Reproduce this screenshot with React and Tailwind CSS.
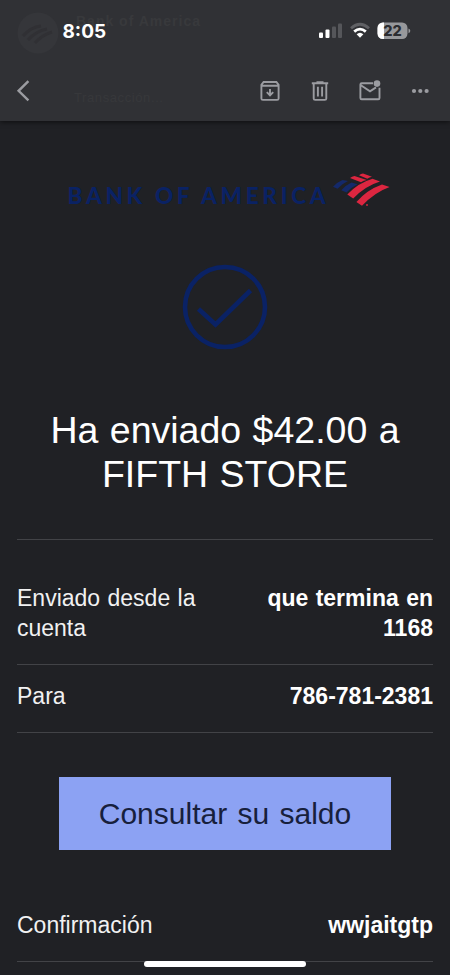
const ROWS = [
  { label: "Enviado desde la cuenta", value: "que termina en 1168" },
  { label: "Para", value: "786-781-2381" },
];

function StatusBar() {
  return (
    <div className="flex h-[62px] items-center justify-between pl-[62.5px] pr-[39px]">
      <span className="font-['Inter',sans-serif] text-[19px] leading-none font-bold text-white">8:05</span>
      <svg width="92" height="18" viewBox="0 0 92 18">
        <rect x="0" y="10.5" width="4" height="5.5" rx="1" fill="#fff" />
        <rect x="6.5" y="7.5" width="4" height="8.5" rx="1" fill="#fff" />
        <rect x="13" y="4.5" width="4" height="11.5" rx="1" fill="#55565a" />
        <rect x="19" y="1.5" width="4" height="14.5" rx="1" fill="#55565a" />
        <path d="M32 6.2 Q41 -1.6 50 6.2" fill="none" stroke="#606165" strokeWidth="2.8" />
        <path d="M35.2 9.6 Q41 4.6 46.8 9.6" fill="none" stroke="#fff" strokeWidth="2.8" />
        <path d="M37.6 12.3 Q41 9.2 44.4 12.3 L41 15.8 Z" fill="#fff" />
        <rect x="58.5" y="0.5" width="30" height="16.5" rx="5.4" fill="#97989b" />
        <path d="M65 0.5 H63.9 A5.4 5.4 0 0 0 58.5 5.9 V11.6 A5.4 5.4 0 0 0 63.9 17 H65 Z" fill="#fff" />
        <path d="M89.5 6.4 Q91.3 7.2 91.3 8.8 Q91.3 10.4 89.5 11.2 Z" fill="#97989b" />
        <text x="73.5" y="13.8" textAnchor="middle" fontFamily="Inter, sans-serif" fontSize="14.5" fontWeight="800" fill="#2b2c30">
          22
        </text>
      </svg>
    </div>
  );
}

function Toolbar() {
  return (
    <div className="flex h-[58px] items-center justify-between pl-[16px] pr-[19px] text-[#9b9ca1]">
      <svg width="15" height="22" viewBox="0 0 15 22" fill="none" stroke="currentColor" strokeWidth="2.4">
        <path d="M12.4 1.2 L2.6 10.8 L12.4 20.4" />
      </svg>
      <div className="flex items-center gap-[28px]">
        <svg width="22" height="22" viewBox="0 0 22 22" fill="none" stroke="currentColor" strokeWidth="1.9">
          <path d="M2.4 4.8 L4.6 2 H17.4 L19.6 4.8 V18.4 Q19.6 19.9 18.1 19.9 H3.9 Q2.4 19.9 2.4 18.4 Z M2.4 5.8 H19.6 M11 9 V15 M7.8 12.2 L11 15.4 L14.2 12.2" />
        </svg>
        <svg width="22" height="22" viewBox="0 0 22 22" fill="none" stroke="currentColor" strokeWidth="1.9">
          <path d="M2.8 3.3 H19.2 M7.5 2.2 H14.5 M4.7 3.8 V18.4 Q4.7 19.9 6.2 19.9 H15.8 Q17.3 19.9 17.3 18.4 V3.8 M8.9 6.7 V16.5 M13.1 6.7 V16.5" />
        </svg>
        <svg width="22" height="22" viewBox="0 0 22 22" fill="none" stroke="currentColor" strokeWidth="1.9">
          <path d="M14 3.3 H2.7 Q1.4 3.3 1.4 4.6 V17.9 Q1.4 19.2 2.7 19.2 H19.2 Q20.5 19.2 20.5 17.9 V7.8 M1.9 5.2 L11 11.4 L17 7.4" />
          <circle cx="18" cy="3.6" r="3.3" fill="currentColor" stroke="none" />
        </svg>
        <svg width="22" height="22" viewBox="0 0 22 22" fill="currentColor">
          <circle cx="5" cy="11" r="2.1" />
          <circle cx="11.3" cy="11" r="2.1" />
          <circle cx="17.6" cy="11" r="2.1" />
        </svg>
      </div>
    </div>
  );
}

// message header that scrolls under the translucent bar
function ScrolledHeader() {
  return (
    <div className="absolute inset-0 overflow-hidden text-[#38393c]" aria-hidden="true">
      <svg className="absolute left-[17px] top-[12px]" width="42" height="42" viewBox="0 0 42 42">
        <circle cx="21" cy="21" r="20.5" fill="#35363a" />
        <path d="M6 24 Q14 15 24 14 M11 28 Q19 19 30 17 M18 31 Q25 23 35 20" stroke="#303034" strokeWidth="3" fill="none" />
      </svg>
      <div className="absolute left-[76px] top-[14px] text-[14px] leading-none font-bold tracking-[1px]">Bank of America</div>
      <div className="absolute left-[74px] top-[91px] text-[13px] leading-none tracking-[0.6px] text-[#37383b]">Transacción...</div>
    </div>
  );
}

function BankLogo() {
  return (
    <div className="flex h-[42px] items-start justify-center">
      <svg width="330" height="42" viewBox="0 0 330 42">
        <text
          x="7.5"
          y="33"
          textLength="258"
          lengthAdjust="spacing"
          fontFamily="Lato, sans-serif"
          fontSize="22.5"
          fontWeight="900"
          fill="#0a2264"
        >
          BANK OF AMERICA
        </text>
        <g fill="#14296a">
          <path d="M273 15.7 Q277.5 11 282.5 9 L288 10 Q282 12.8 277.5 17.7 Z" />
          <path d="M281.3 19.2 Q286 13.8 291.5 11.4 L297.5 13.2 Q291.5 16 286.5 21.5 Z" />
        </g>
        <g fill="#dc2640">
          <path d="M290 6.9 Q292 5.4 294.5 4.9 L306.8 9 Q303.5 9.6 301 11.3 Z" />
          <path d="M299 4.2 Q301 2.9 303 2.6 L312 5.8 Q309.5 6.4 307.3 7.8 Z" />
          <path d="M287.3 23.6 Q298 12 312.5 7.8 L320 10.4 Q305 15 293.2 27.4 Z" />
          <path d="M296.4 31 Q307 18.8 322 13.5 L329.6 16 Q314.5 21.4 302 34.8 Z" />
          <circle cx="307" cy="34" r="0.9" />
        </g>
      </svg>
    </div>
  );
}

function DetailRow({ label, value, className }) {
  return (
    <div className={`flex justify-between border-b border-[#424347] text-[23px] leading-[30px] text-[#f1f1f2] [word-spacing:1px] ${className}`}>
      <span className="w-[200px]">{label}</span>
      <span className="w-[180px] text-right font-bold text-white">{value}</span>
    </div>
  );
}

export default function App() {
  return (
    <div className="relative h-[975px] w-[450px] overflow-hidden bg-[#202125] font-['Liberation_Sans',sans-serif]">
      <header className="relative h-[121px] bg-[#303135] shadow-[0_1px_5px_rgba(0,0,0,0.6)]">
        <ScrolledHeader />
        <div className="relative">
          <StatusBar />
          <Toolbar />
        </div>
      </header>

      <main className="px-[17px] pt-[50px]">
        <BankLogo />

        <svg className="mx-auto mt-[51px] block" width="86" height="86" viewBox="0 0 86 86" fill="none" stroke="#0a2265">
          <circle cx="43" cy="43" r="40" strokeWidth="4.6" />
          <path d="M16.5 45 L33.5 60.5 L68.5 26.5" strokeWidth="4.6" />
        </svg>

        <h1 className="mt-[58px] text-center text-[37.5px] leading-[44px] text-white [word-spacing:1px]">
          Ha enviado $42.00 a
          <br />
          FIFTH STORE
        </h1>

        <div className="mt-[43px] border-t border-[#424347]">
          <DetailRow {...ROWS[0]} className="h-[125px] pt-[43px]" />
          <DetailRow {...ROWS[1]} className="h-[68px] pt-[16px]" />
        </div>

        <button
          type="button"
          className="mx-auto mt-[44px] block h-[73px] w-[332px] bg-[#8ca2f3] text-[30px] leading-[74px] text-[#17203c] [word-spacing:2px]"
        >
          Consultar su saldo
        </button>

        <DetailRow label="Confirmación" value="wwjaitgtp" className="mt-[50px] h-[62px] pt-[10px]" />
      </main>

      <div className="absolute bottom-[8px] left-[144px] h-[6px] w-[162px] rounded-full bg-white" />
    </div>
  );
}
